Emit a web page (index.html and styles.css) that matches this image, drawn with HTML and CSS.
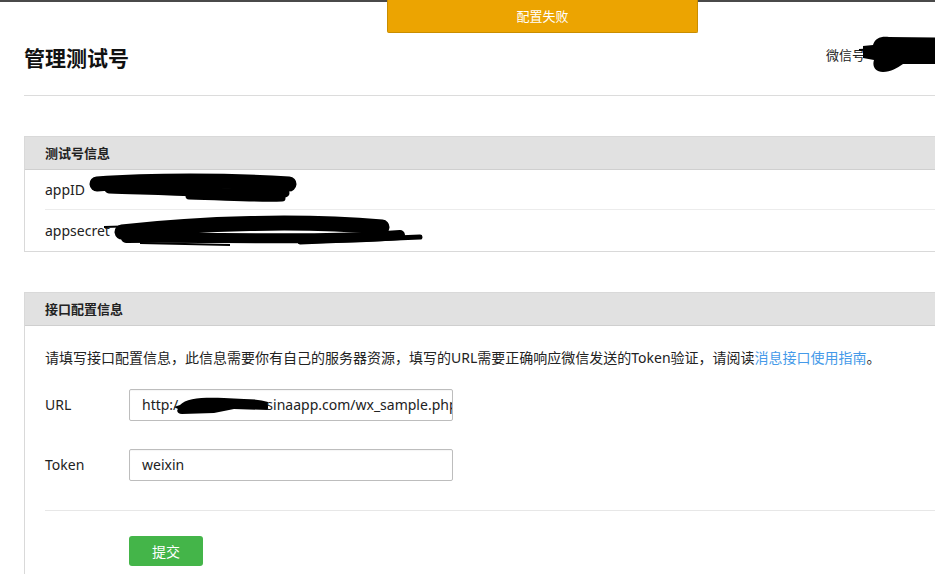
FILE: index.html
```html
<!DOCTYPE html>
<html lang="zh-CN">
<head>
  <meta charset="UTF-8">
  <meta name="viewport" content="width=device-width, initial-scale=1.0">
  <link rel="stylesheet" href="styles.css">
  <title>管理测试号</title>
</head>
<body>

<div class="topbar"></div>
<div class="toast">配置失败</div>

<div class="page">

  <div class="head">
    <h1>管理测试号</h1>
    <div class="account">
      <span>微信号</span>
      <svg class="scrawl" width="110" height="40" viewBox="0 0 110 40">
        <path d="M0 12 L10 11 C12 4 18 2 26 3 L110 4 L110 30 L40 30 C34 34 28 38 20 38 C12 38 9 32 11 26 L0 24 Z" fill="#000"/>
        <path d="M-4 16 L14 15" stroke="#000" stroke-width="2"/>
      </svg>
    </div>
  </div>

  <div class="panel">
    <div class="panel-title">测试号信息</div>
    <div class="row">
      <span>appID</span>
      <svg class="scrawl" width="210" height="30" viewBox="0 0 210 30">
        <path d="M8 9 C60 5 140 5 200 9" stroke="#000" stroke-width="15" stroke-linecap="round" fill="none"/>
        <path d="M20 14 C80 16 150 19 196 18" stroke="#000" stroke-width="9" stroke-linecap="round" fill="none"/>
        <path d="M100 21 C140 22 170 24 193 23" stroke="#000" stroke-width="7" stroke-linecap="round" fill="none"/>
      </svg>
    </div>
    <div class="row">
      <span>appsecret</span>
      <svg class="scrawl low" width="330" height="34" viewBox="0 0 330 34">
        <path d="M4 10 L40 9" stroke="#000" stroke-width="2" fill="none"/>
        <path d="M22 15 C100 6 200 3 282 10" stroke="#000" stroke-width="15" stroke-linecap="round" fill="none"/>
        <path d="M26 21 C120 20 220 24 300 18" stroke="#000" stroke-width="10" stroke-linecap="round" fill="none"/>
        <path d="M40 26 L130 28" stroke="#000" stroke-width="2" fill="none"/>
        <path d="M200 25 L320 20" stroke="#000" stroke-width="5" stroke-linecap="round" fill="none"/>
      </svg>
    </div>
  </div>

  <div class="panel">
    <div class="panel-title">接口配置信息</div>
    <div class="panel-body">
      <p class="desc">请填写接口配置信息，此信息需要你有自己的服务器资源，填写的URL需要正确响应微信发送的Token验证，请阅读<a href="#">消息接口使用指南</a>。</p>

      <div class="field">
        <label>URL</label>
        <div class="input">http:/<svg class="scrawl" width="94" height="22" viewBox="0 0 94 22">
            <path d="M0 13 L6 11 C12 4 30 3 50 4 L70 5 C80 5 88 6 94 8 L94 16 L60 15 L40 19 L8 20 C4 20 2 17 4 15 Z" fill="#000"/>
          </svg>sinaapp.com/wx_sample.php</div>
      </div>

      <div class="field">
        <label>Token</label>
        <div class="input">weixin</div>
      </div>

      <div class="actions">
        <button>提交</button>
      </div>
    </div>
  </div>

</div>

</body>
</html>
```

FILE: styles.css
```css
body {
  margin: 0;
  font-family: "Noto Sans", "Noto Sans CJK SC", sans-serif;
  font-size: 14px;
  color: #222;
  background-color: #fff;
  overflow: hidden;
}

.topbar {
  height: 2px;
  background-color: #4a4a4a;
}

.toast {
  position: absolute;
  left: 387px;
  top: 0;
  width: 309px;
  height: 32px;
  line-height: 32px;
  background-color: #eca401;
  border: 1px solid #c98d00;
  border-top: none;
  border-radius: 0 0 2px 2px;
  color: #fff;
  font-size: 13px;
  text-align: center;
}

.page {
  margin-left: 24px;
  width: 1000px;
}

.head {
  display: flex;
  align-items: center;
  height: 32px;
  padding: 40px 0 21px;
  border-bottom: 1px solid #dcdcdc;
}

h1 {
  margin: 0;
  font-size: 21px;
  line-height: 32px;
  font-weight: bold;
  color: #111;
}

.account {
  display: flex;
  align-items: center;
  height: 20px;
  margin-left: auto;
  margin-right: 51px;
  margin-top: -8px;
  font-size: 13px;
}

.account .scrawl {
  margin: 0 0 0 -2px;
  flex-shrink: 0;
}

.scrawl {
  display: inline-block;
  vertical-align: middle;
  overflow: visible;
}

.panel {
  margin-top: 40px;
  border: 1px solid #d9d9d9;
}

.panel-title {
  height: 32px;
  line-height: 32px;
  padding-left: 20px;
  background-color: #e1e1e1;
  border-bottom: 1px solid #cfcfcf;
  font-size: 13px;
  font-weight: bold;
  color: #222;
}

.row {
  display: flex;
  align-items: center;
  height: 39px;
  margin-left: 20px;
  border-bottom: 1px solid #ececec;
}

.row:last-child {
  height: 41px;
  border-bottom: none;
}

.row span {
  margin-right: 4px;
}

.row .low {
  margin-top: 6px;
  margin-left: -14px;
}

.panel-body {
  padding: 21px 0 20px 20px;
}

.desc {
  margin: 0 0 20px;
  line-height: 22px;
}

.desc a {
  color: #459ae9;
  text-decoration: none;
}

.field {
  display: flex;
  align-items: center;
  margin-bottom: 28px;
}

.field label {
  width: 84px;
  margin-top: -2px;
}

.input {
  width: 310px;
  height: 30px;
  line-height: 30px;
  padding-left: 12px;
  border: 1px solid #bdbdbd;
  border-radius: 2px;
  white-space: nowrap;
  overflow: hidden;
  box-shadow: inset 0 1px 1px rgba(0, 0, 0, 0.04);
}

.input .scrawl {
  margin: -2px -2px 0 -4px;
}

.actions {
  margin-top: 29px;
  padding: 25px 0 0 84px;
  border-top: 1px solid #e7e7e7;
}

button {
  width: 74px;
  height: 30px;
  border: none;
  border-radius: 3px;
  background-color: #44b549;
  color: #fff;
  font-family: "Noto Sans CJK SC", sans-serif;
  font-size: 14px;
  cursor: pointer;
}
```
